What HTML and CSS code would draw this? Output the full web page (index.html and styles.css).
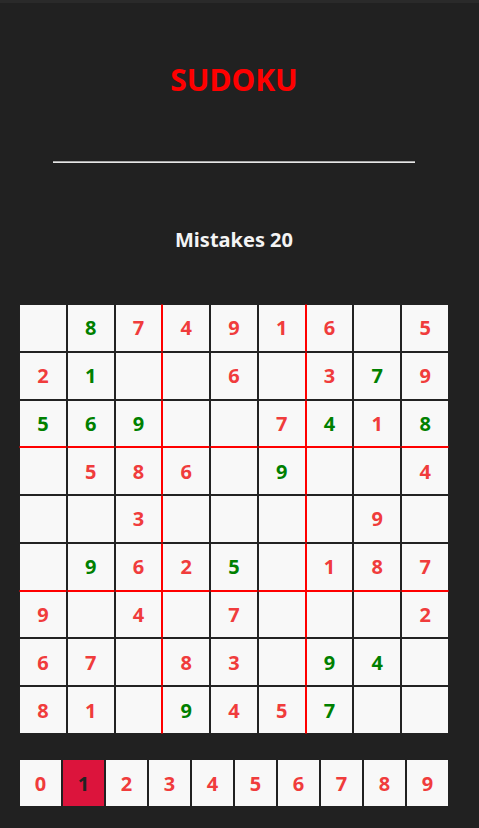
FILE: index.html
```html
<!DOCTYPE html>
<html>
<head>
<meta charset="utf-8">
<title>Sudoku</title>
<link rel="stylesheet" href="styles.css">
</head>
<body>
<div class="app">
  <h1 class="title">SUDOKU</h1>
  <hr class="rule">
  <h2 class="mistakes">Mistakes 20</h2>
  <div class="board">
    <div class="tile"></div><div class="tile g">8</div><div class="tile r c3">7</div><div class="tile r c4">4</div><div class="tile r">9</div><div class="tile r c6">1</div><div class="tile r c7">6</div><div class="tile"></div><div class="tile r">5</div>
    <div class="tile r">2</div><div class="tile g">1</div><div class="tile c3"></div><div class="tile c4"></div><div class="tile r">6</div><div class="tile c6"></div><div class="tile r c7">3</div><div class="tile g">7</div><div class="tile r">9</div>
    <div class="tile g r3">5</div><div class="tile g r3">6</div><div class="tile g r3 c3">9</div><div class="tile r3 c4"></div><div class="tile r3"></div><div class="tile r r3 c6">7</div><div class="tile g r3 c7">4</div><div class="tile r r3">1</div><div class="tile g r3">8</div>
    <div class="tile r4"></div><div class="tile r r4">5</div><div class="tile r r4 c3">8</div><div class="tile r r4 c4">6</div><div class="tile r4"></div><div class="tile g r4 c6">9</div><div class="tile r4 c7"></div><div class="tile r4"></div><div class="tile r r4">4</div>
    <div class="tile"></div><div class="tile"></div><div class="tile r c3">3</div><div class="tile c4"></div><div class="tile"></div><div class="tile c6"></div><div class="tile c7"></div><div class="tile r">9</div><div class="tile"></div>
    <div class="tile r6"></div><div class="tile g r6">9</div><div class="tile r r6 c3">6</div><div class="tile r r6 c4">2</div><div class="tile g r6">5</div><div class="tile r6 c6"></div><div class="tile r r6 c7">1</div><div class="tile r r6">8</div><div class="tile r r6">7</div>
    <div class="tile r r7">9</div><div class="tile r7"></div><div class="tile r r7 c3">4</div><div class="tile r7 c4"></div><div class="tile r r7">7</div><div class="tile r7 c6"></div><div class="tile r7 c7"></div><div class="tile r7"></div><div class="tile r r7">2</div>
    <div class="tile r">6</div><div class="tile r">7</div><div class="tile c3"></div><div class="tile r c4">8</div><div class="tile r">3</div><div class="tile c6"></div><div class="tile g c7">9</div><div class="tile g">4</div><div class="tile"></div>
    <div class="tile r">8</div><div class="tile r">1</div><div class="tile c3"></div><div class="tile g c4">9</div><div class="tile r">4</div><div class="tile r c6">5</div><div class="tile g c7">7</div><div class="tile"></div><div class="tile"></div>
  </div>
  <div class="digits">
    <div class="digit">0</div>
    <div class="digit selected">1</div>
    <div class="digit">2</div>
    <div class="digit">3</div>
    <div class="digit">4</div>
    <div class="digit">5</div>
    <div class="digit">6</div>
    <div class="digit">7</div>
    <div class="digit">8</div>
    <div class="digit">9</div>
  </div>
</div>
</body>
</html>
```
FILE: styles.css
```css
html, body {
  margin: 0;
  padding: 0;
}
body {
  background: #212121;
  border-top: 3px solid #2a2a2a;
  font-family: "Comic Sans MS", "Noto Sans", sans-serif;
  height: 825px;
  overflow: hidden;
}
.app {
  width: 452px;
  margin: 0 8px;
  padding-top: 57px;
  display: flex;
  flex-direction: column;
  align-items: center;
}
.title {
  margin: 0;
  height: 40px;
  line-height: 40px;
  font-size: 30px;
  font-weight: 700;
  color: #ff0000;
}
.rule {
  width: 80%;
  margin: 61px 0 0 0;
  height: 0;
  border: none;
  border-top: 1px solid #a8a8a8;
  border-bottom: 1px solid #e6e6e6;
}
.mistakes {
  margin: 65px 0 0 0;
  height: 24px;
  line-height: 24px;
  font-size: 20px;
  font-weight: 700;
  color: #f4f4f4;
}
.board {
  margin-top: 52px;
  width: 430px;
  height: 430px;
  display: grid;
  grid-template-columns: repeat(9, 1fr);
  grid-template-rows: repeat(9, 1fr);
}
.tile {
  box-sizing: border-box;
  background: #f8f8f8;
  border: 1px solid #222222;
  display: flex;
  align-items: center;
  justify-content: center;
  font-size: 20px;
  font-weight: 700;
}
.tile.r { color: #f03c3c; }
.tile.g { color: #008000; }
.tile.c3, .tile.c6 { border-right-color: #ff0000; }
.tile.c4, .tile.c7 { border-left-color: #ff0000; }
.tile.r3, .tile.r6 { border-bottom-color: #ff0000; }
.tile.r4, .tile.r7 { border-top-color: #ff0000; }
.digits {
  margin-top: 26px;
  width: 428px;
  display: grid;
  grid-template-columns: repeat(10, 41px);
  gap: 2px;
}
.digit {
  height: 46px;
  background: #f8f8f8;
  display: flex;
  align-items: center;
  justify-content: center;
  font-size: 20px;
  font-weight: 700;
  color: #f03c3c;
}
.digit.selected {
  background: #dc143c;
  color: #222222;
}
```
